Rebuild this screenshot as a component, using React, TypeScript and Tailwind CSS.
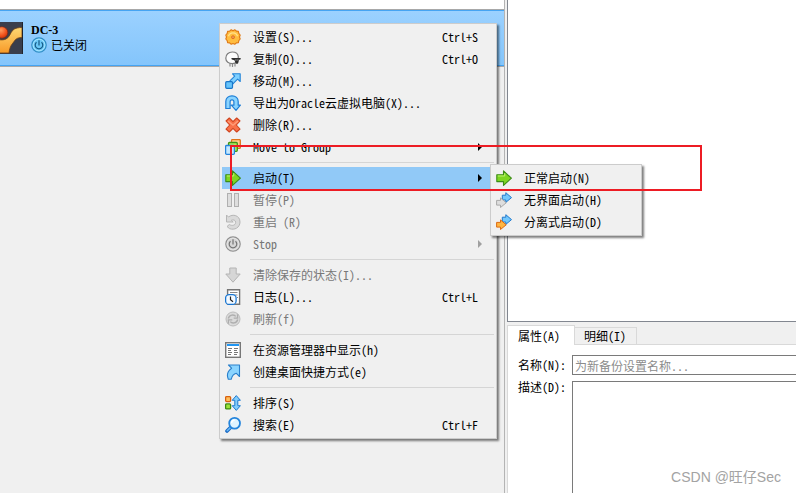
import { useState } from "react";
import type { ReactNode } from "react";

type MenuEntry = {
  label: string;
  icon: ReactNode;
  shortcut?: string;
  disabled?: boolean;
  submenu?: Entry[];
};
type Entry = MenuEntry | "separator";

const Svg = ({ children }: { children: ReactNode }) => (
  <svg viewBox="0 0 16 16" className="size-4 shrink-0" aria-hidden="true">
    {children}
  </svg>
);

const GearIcon = () => (
  <Svg>
    <path
      d="M6.2.8l1.8.9 1.8-.9 1.6 1.3 2 .3.4 2 1.4 1.6L14.500 8l.7 2-1.400 1.600-.4 2-2 .3-1.600 1.300-1.800-.7-1.800.7-1.600-1.300-2-.3-.4-2L.8 10l.7-2-.7-2 1.400-1.600.4-2 2-.3z"
      fill="#ffbc3f"
      stroke="#e07a14"
      strokeWidth="1.1"
      strokeLinejoin="round"
    />
    <path d="M3.500 7.200a4.700 4.700 0 0 1 9 0" fill="none" stroke="#ffe08a" strokeWidth="1.4" />
    <circle cx="8" cy="8.200" r="1.500" fill="#f0935a" stroke="#d9660f" strokeWidth=".7" />
  </Svg>
);

const SheepIcon = () => (
  <Svg>
    <path d="M5 12v3.5M7.500 12.500V16M10 11.500v4" stroke="#8a8a8a" strokeWidth="1.2" />
    <path
      d="M7.200 1c3.300 0 5.800 1.800 6.100 4.600.4 4-2.300 7-5.800 7.100C3.800 12.800.8 10.800.8 7.200.8 3.600 3.500 1 7.200 1z"
      fill="#fcfcfc"
      stroke="#7d7d7d"
      strokeWidth="1.2"
    />
    <path d="M6.300 7h9.500l-.5 1.700h-1.200l-1 3.500c-.6.900-1.800.9-2.400 0L9.400 9.300 6.800 8.600z" fill="#303030" />
    <path d="M10.500 9h.9M12.500 9h.8" stroke="#e6e6e6" />
  </Svg>
);

const MoveIcon = () => (
  <Svg>
    <path
      d="M7.500.8h7.700v7.700l-2.600-2.400-4.700 4.700-3-3 4.800-4.700z"
      fill="#7ed0ff"
      stroke="#2384d8"
      strokeWidth="1.1"
      strokeLinejoin="round"
    />
    <rect x=".7" y="8.700" width="6.800" height="6.600" rx="1" fill="#66c4fb" stroke="#1b76c8" strokeWidth="1.2" />
  </Svg>
);

const ExportIcon = () => (
  <Svg>
    <path
      d="M.8 13.500V6.500C.8 3 3.300.8 7 .8s6.200 2.200 6.200 5.700v3.700h2.200L11 15.300l-4.700-5.100h2.600V6.800c0-1.300-.7-2-1.900-2s-1.900.7-1.900 2v6.700z"
      fill="#8ad4ff"
      stroke="#1f7ed6"
      strokeWidth="1.2"
      strokeLinejoin="round"
    />
  </Svg>
);

const DeleteIcon = () => (
  <Svg>
    <path
      d="M4.300 1L8 4.600 11.700 1 15 4 11.300 8l3.700 4-3.300 3L8 11.400 4.300 15 1 12l3.700-4L1 4z"
      fill="#f9724a"
      stroke="#d0451f"
      strokeWidth="1.1"
      strokeLinejoin="round"
    />
    <path d="M3 4l5 4.200L13 4" fill="none" stroke="#ff9f7a" strokeWidth="1.2" />
  </Svg>
);

const GroupIcon = () => (
  <Svg>
    <rect x="6.500" y=".6" width="8.800" height="8.800" rx="1" fill="#ffd08a" stroke="#e0741a" strokeWidth="1.3" />
    <rect x="3.500" y="3.500" width="8.800" height="8.800" rx="1" fill="#b4ec58" stroke="#3f9414" strokeWidth="1.3" />
    <rect x=".6" y="6.500" width="8.800" height="8.800" rx="1" fill="#c4e8ff" stroke="#2484dc" strokeWidth="1.3" />
  </Svg>
);

const StartIcon = () => (
  <Svg>
    <path
      d="M.8 4.800h6.700V.9l7.900 7.300-7.900 7.200v-3.800H.8z"
      fill="#7ed622"
      stroke="#3c8c16"
      strokeWidth="1.1"
      strokeLinejoin="round"
    />
    <path d="M1.800 6h6.900V3.300" fill="none" stroke="#baf26e" />
  </Svg>
);

const PauseIcon = () => (
  <Svg>
    <rect x="2.500" y="1.500" width="4" height="13" fill="#dedede" stroke="#b0b0b0" />
    <rect x="9.500" y="1.500" width="4" height="13" fill="#dedede" stroke="#b0b0b0" />
  </Svg>
);

const ResetIcon = () => (
  <Svg>
    <path
      d="M1.500 1l2 2C7.500-.4 15 1.200 15 8c0 5.500-5.500 8.600-10.500 6.600L2 12.500l2.300-2c3 1.800 6.200.7 6.300-2 .1-2.300-2.300-3.300-4.200-2.200L8.200 8H1.500z"
      fill="#dadada"
      stroke="#b6b6b6"
      strokeLinejoin="round"
    />
  </Svg>
);

const PowerIcon = ({ blue = false }: { blue?: boolean }) => (
  <Svg>
    <circle
      cx="8"
      cy="8"
      r="7.2"
      fill={blue ? "#6cc8f6" : "#d6d6d6"}
      stroke={blue ? "#2f8cc4" : "#8f8f8f"}
      strokeWidth="1.2"
    />
    <circle cx="8" cy="8" r="5.900" fill="none" stroke={blue ? "#a8e6ff" : "#e4e4e4"} strokeWidth="1" />
    <path
      d="M5.500 5.200a3.800 3.800 0 1 0 5 0M8 3.200v5.300"
      fill="none"
      stroke={blue ? "#155a86" : "#737373"}
      strokeWidth="1.2"
    />
  </Svg>
);

const DiscardIcon = () => (
  <Svg>
    <path d="M4.800 1h6.400v6h4L8 15.200.8 7h4z" fill="#d6d6d6" stroke="#b4b4b4" strokeLinejoin="round" />
  </Svg>
);

const LogIcon = () => (
  <Svg>
    <path d="M2.600.7h12v14.600h-12z" fill="#fff" stroke="#757575" strokeWidth="1.4" />
    <path d="M5 3.500h7.500M9.500 6h3M12 8.500h1" stroke="#888" />
    <rect x=".6" y="5.600" width="10.500" height="9.800" rx="3.500" fill="#f2f9ff" stroke="#1976d2" strokeWidth="1.3" />
    <path d="M5.500 7.500v3.300l2.500 2" fill="none" stroke="#222" strokeWidth="1.2" />
  </Svg>
);

const RefreshIcon = () => (
  <Svg>
    <circle cx="8" cy="8" r="7" fill="#dadada" stroke="#bcbcbc" />
    <path
      d="M3.300 7.500C4.300 3.500 9 3.300 10.700 5.400M12.600 3.200v3.900H8.700M12.700 8.500c-1 4-5.700 4.200-7.400 2.100M3.400 12.800V8.900h3.900"
      fill="none"
      stroke="#adadad"
      strokeWidth="1.4"
    />
  </Svg>
);

const ExplorerIcon = () => (
  <Svg>
    <rect x=".7" y=".7" width="14.600" height="14.600" fill="#fff" stroke="#777" strokeWidth="1.4" />
    <path d="M2 3h12" stroke="#2196f3" strokeWidth="2" />
    <path d="M3 6.500h4M3 8.500h3M3 10.500h4M3 12.500h3M9 6.500h4M9 8.500h3M9 10.500h4M9 12.500h3" stroke="#777" />
  </Svg>
);

const ShortcutIcon = () => (
  <Svg>
    <path
      d="M3.500 1H14.500v11.500L11.400 9.300C8.500 10 7 12 6.200 15.300H3.300C1.300 10.500 3 6.800 6.600 4.200z"
      fill="#8ad4ff"
      stroke="#2a80cc"
      strokeWidth="1.1"
      strokeLinejoin="round"
    />
  </Svg>
);

const SortIcon = () => (
  <Svg>
    <rect x=".6" y="1.600" width="5" height="5" rx="1" fill="#ffbe5c" stroke="#d8600e" strokeWidth="1.3" />
    <rect x=".6" y="8.900" width="5" height="5" rx="1" fill="#9ce238" stroke="#3c8a12" strokeWidth="1.3" />
    <path
      d="M11.300.6l4.100 4.700h-2.600v5.400h2.600l-4.100 4.700-4.100-4.700h2.600V5.300H7.200z"
      fill="#84cdfb"
      stroke="#1f7ad0"
      strokeLinejoin="round"
    />
  </Svg>
);

const SearchIcon = () => (
  <Svg>
    <path d="M2 14l4-4" stroke="#1667c4" strokeWidth="3.6" strokeLinecap="round" />
    <path d="M2.200 13.700l3.500-3.300" stroke="#6bbcf7" strokeWidth="1.5" strokeLinecap="round" />
    <circle cx="9.600" cy="6.300" r="5.400" fill="#dff3ff" stroke="#2384dc" strokeWidth="1.8" />
    <path d="M6.500 6a3.300 3.300 0 0 1 3.200-3" fill="none" stroke="#fff" strokeWidth="1.3" />
  </Svg>
);

const DoubleArrowIcon = ({ orange = false }: { orange?: boolean }) => (
  <Svg>
    <path
      d="M6.300 3.200h3.500V.7l5.700 4.900-5.700 4.800V8H6.300z"
      fill="#74c8fc"
      stroke="#2078cc"
      strokeLinejoin="round"
    />
    <path
      d="M.6 8.400h3.900V5.900l5.700 4.900-5.700 4.700v-2.400H.6z"
      fill={orange ? "#ffb642" : "#dedede"}
      stroke={orange ? "#dc6a12" : "#a8a8a8"}
      strokeLinejoin="round"
    />
  </Svg>
);

const MachineIcon = () => (
  <svg viewBox="0 0 32 32" className="-ml-[9px] size-8 shrink-0" aria-hidden="true">
    <defs>
      <linearGradient id="gold" x1="0" y1="0" x2="0" y2="1">
        <stop offset="0" stopColor="#ffd873" />
        <stop offset="1" stopColor="#f79a28" />
      </linearGradient>
      <radialGradient id="ball" cx=".4" cy=".3" r=".8">
        <stop offset="0" stopColor="#ff9b5c" />
        <stop offset=".6" stopColor="#f0501a" />
        <stop offset="1" stopColor="#b52c08" />
      </radialGradient>
    </defs>
    <rect width="32" height="32" fill="#3a3e4c" />
    <path
      d="M0 17c6 0 11 2 15 0 4-2 4-6 7-9 2-2 6-2.500 9-2.500V15.500c-4 0-6 1-8 4-2 3-4 4-5 11.500H0z"
      fill="url(#gold)"
      stroke="#6a3d18"
      strokeWidth=".8"
    />
    <circle cx="11" cy="10.500" r="5.800" fill="url(#ball)" stroke="#7a2410" strokeWidth=".6" />
    <path d="M31.500 0v32" stroke="#20242e" />
  </svg>
);

const startMenu: Entry[] = [
  { label: "正常启动(N)", icon: <StartIcon /> },
  { label: "无界面启动(H)", icon: <DoubleArrowIcon /> },
  { label: "分离式启动(D)", icon: <DoubleArrowIcon orange /> },
];

const machineMenu: Entry[] = [
  { label: "设置(S)...", icon: <GearIcon />, shortcut: "Ctrl+S" },
  { label: "复制(O)...", icon: <SheepIcon />, shortcut: "Ctrl+O" },
  { label: "移动(M)...", icon: <MoveIcon /> },
  { label: "导出为Oracle云虚拟电脑(X)...", icon: <ExportIcon /> },
  { label: "删除(R)...", icon: <DeleteIcon /> },
  { label: "Move to Group", icon: <GroupIcon />, submenu: [] },
  "separator",
  { label: "启动(T)", icon: <StartIcon />, submenu: startMenu },
  { label: "暂停(P)", icon: <PauseIcon />, disabled: true },
  { label: "重启 (R)", icon: <ResetIcon />, disabled: true },
  { label: "Stop", icon: <PowerIcon />, disabled: true, submenu: [] },
  "separator",
  { label: "清除保存的状态(I)...", icon: <DiscardIcon />, disabled: true },
  { label: "日志(L)...", icon: <LogIcon />, shortcut: "Ctrl+L" },
  { label: "刷新(f)", icon: <RefreshIcon />, disabled: true },
  "separator",
  { label: "在资源管理器中显示(h)", icon: <ExplorerIcon /> },
  { label: "创建桌面快捷方式(e)", icon: <ShortcutIcon /> },
  "separator",
  { label: "排序(S)", icon: <SortIcon /> },
  { label: "搜索(E)", icon: <SearchIcon />, shortcut: "Ctrl+F" },
];

const Menu = ({ entries, className }: { entries: Entry[]; className: string }) => {
  const [open, setOpen] = useState("启动(T)");

  return (
    <div
      role="menu"
      className={`absolute border border-[#cccccc] bg-[#f0f0f0] p-0.5 shadow-[2px_2px_2px_rgba(0,0,0,0.5)] ${className}`}
    >
      {entries.map((entry, i) =>
        entry === "separator" ? (
          <div key={i} role="separator" className="ml-7 flex h-[9px] items-center">
            <div className="h-px w-full bg-[#d5d5d5]" />
          </div>
        ) : (
          <div key={entry.label} className="relative">
            <button
              type="button"
              role="menuitem"
              disabled={entry.disabled}
              onClick={() => setOpen(entry.label)}
              className={`flex h-[22px] w-full items-center pr-3 pl-[3px] whitespace-nowrap ${
                entry.disabled ? "text-[#787878]" : "text-black"
              } ${entry.submenu && open === entry.label ? "bg-[#91c9f7]" : ""}`}
            >
              {entry.icon}
              <span className="ml-3">{entry.label}</span>
              {entry.shortcut && <span className="mr-1 ml-auto">{entry.shortcut}</span>}
              {entry.submenu && (
                <svg viewBox="0 0 4 8" className="ml-auto h-2 w-1" aria-hidden="true">
                  <path d="M0 0l4 4-4 4z" fill={entry.disabled ? "#a0a0a0" : "#000"} />
                </svg>
              )}
            </button>
            {entry.submenu && entry.submenu.length > 0 && open === entry.label && (
              <Menu entries={entry.submenu} className="-top-[3px] left-[268px] w-[152px]" />
            )}
          </div>
        )
      )}
    </div>
  );
};

const MachineList = () => (
  <section className="relative mr-0.5 border-r border-[#b4b4b4] bg-[#f0f0f0]">
    <div className="h-[9px] bg-white" />
    <div className="flex h-[58px] items-center overflow-hidden border-y border-[#a8a8a8]">
      <div className="flex h-14 w-full items-center gap-2 border-y border-[#45a4f3] bg-linear-to-b from-[#9bd1ff] to-[#84c5fb]">
        <MachineIcon />
        <div>
          <p className="font-['Liberation_Serif'] text-xs leading-[14px] font-bold">DC-3</p>
          <p className="flex items-center gap-1 leading-4">
            <PowerIcon blue />
            已关闭
          </p>
        </div>
      </div>
    </div>
    <Menu entries={machineMenu} className="top-[23px] left-[219px] w-[278px]" />
  </section>
);

const SnapshotDetails = () => {
  const [tab, setTab] = useState("属性(A)");

  return (
    <section className="grid min-w-0 grid-rows-[322fr_171fr]">
      <div className="border-b border-l border-[#828790] bg-white" />
      <div className="flex min-h-0 flex-col pt-[3px]">
        <div className="flex items-end" role="tablist">
          {["属性(A)", "明细(I)"].map((name) => (
            <button
              key={name}
              type="button"
              role="tab"
              aria-selected={tab === name}
              onClick={() => setTab(name)}
              className={`border-t border-r border-[#d9d9d9] whitespace-nowrap ${
                tab === name ? "h-5 border-l bg-white pr-3.5 pl-2.5" : "h-[18px] border-b pr-2.5 pl-[9px]"
              }`}
            >
              {name}
            </button>
          ))}
          <div className="h-px flex-1 bg-[#d9d9d9]" />
        </div>
        <form className="grid flex-1 grid-cols-[auto_1fr] grid-rows-[auto_1fr] gap-1.5 border-l border-[#d9d9d9] bg-white pt-2.5 pl-2.5">
          <label htmlFor="name" className="leading-5">
            名称(N):
          </label>
          <input
            id="name"
            placeholder="为新备份设置名称..."
            className="h-5 w-full min-w-0 border border-r-0 border-[#7a7a7a] px-0.5 placeholder:text-[#8c8c8c]"
          />
          <label htmlFor="description" className="leading-3">
            描述(D):
          </label>
          <textarea
            id="description"
            className="size-full resize-none border border-r-0 border-b-0 border-[#7a7a7a] px-0.5 outline-none"
          />
        </form>
      </div>
    </section>
  );
};

const App = () => {
  return (
    <main className="relative grid h-screen grid-cols-[507fr_289fr] overflow-hidden bg-[#f0f0f0] font-['Noto_Sans_Mono_CJK_SC','Noto_Sans_CJK_SC',monospace] text-xs text-black">
      <MachineList />
      <SnapshotDetails />
      <div className="pointer-events-none absolute top-[145px] left-[230px] h-[46px] w-[472px] border-2 border-[#ed1c24]" />
      <p className="pointer-events-none absolute right-[15px] bottom-1.5 font-['Liberation_Sans','Noto_Sans_CJK_SC',sans-serif] text-sm leading-5 text-[#a3a3a3]">
        CSDN @旺仔Sec
      </p>
    </main>
  );
};

export default App;
